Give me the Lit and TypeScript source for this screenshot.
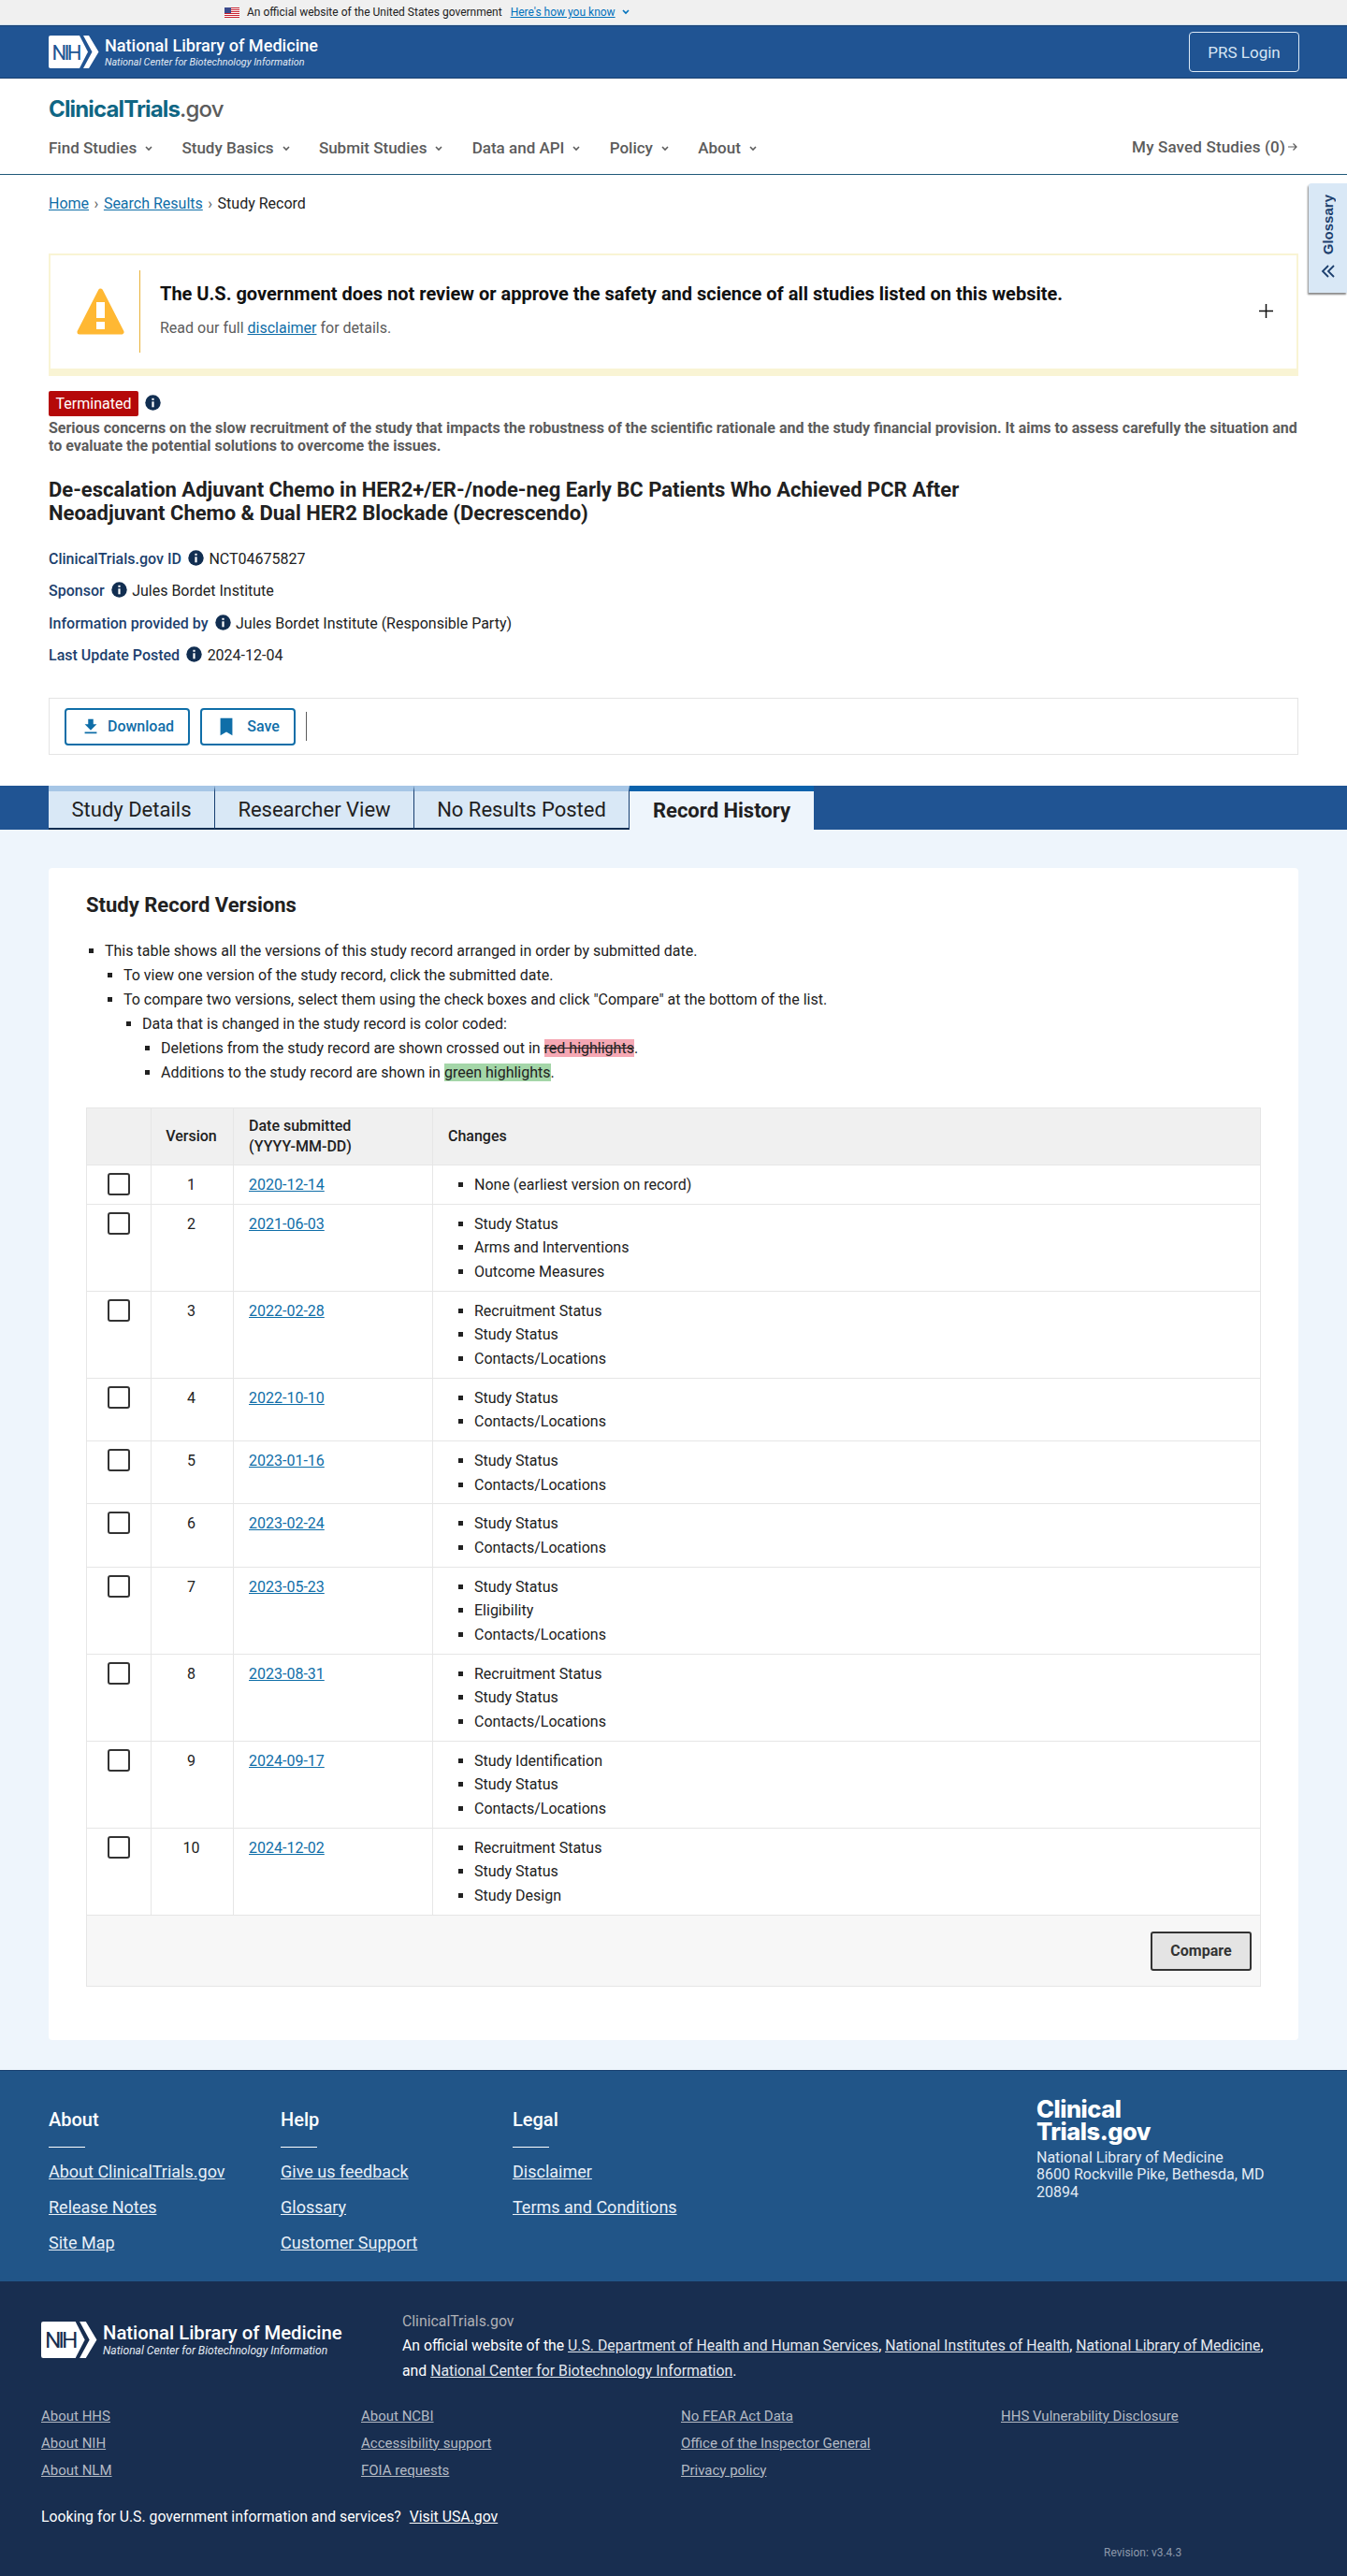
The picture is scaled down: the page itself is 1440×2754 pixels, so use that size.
import { LitElement, html, css, svg } from "lit";
import { customElement } from "lit/decorators.js";

const rows: [string, string[]][] = [
  ["2020-12-14", ["None (earliest version on record)"]],
  ["2021-06-03", ["Study Status", "Arms and Interventions", "Outcome Measures"]],
  ["2022-02-28", ["Recruitment Status", "Study Status", "Contacts/Locations"]],
  ["2022-10-10", ["Study Status", "Contacts/Locations"]],
  ["2023-01-16", ["Study Status", "Contacts/Locations"]],
  ["2023-02-24", ["Study Status", "Contacts/Locations"]],
  ["2023-05-23", ["Study Status", "Eligibility", "Contacts/Locations"]],
  ["2023-08-31", ["Recruitment Status", "Study Status", "Contacts/Locations"]],
  ["2024-09-17", ["Study Identification", "Study Status", "Contacts/Locations"]],
  ["2024-12-02", ["Recruitment Status", "Study Status", "Study Design"]],
];

const chevron = html`<svg class="chev" viewBox="0 0 8 6" width="8" height="6"><path d="M1 1l3 3 3-3" fill="none" stroke="currentColor" stroke-width="1.6"/></svg>`;
const info = html`<svg class="info" viewBox="0 0 17 17" width="17" height="17"><circle cx="8.500" cy="8.500" r="8.200" fill="#112e51"/><rect x="7.400" y="7.300" width="2.200" height="6" fill="#fff"/><rect x="7.400" y="3.800" width="2.200" height="2" fill="#fff"/></svg>`;

function nihLogo(h: number, w: number, navy: string) {
  return html`<svg class="nih" viewBox="0 0 54 35" width=${w} height=${h}>
    <path d="M2 0H33L42 17.5 33 35H2Q0 35 0 33V2Q0 0 2 0Z" fill="#fff"/>
    <path d="M37 0H43L53.5 17.5 43 35H37L46.5 17.5Z" fill="#fff"/>
    <text x="3.500" y="25.500" font-family="Roboto, sans-serif" font-size="22" textLength="32" fill=${navy}>NIH</text>
  </svg>`;
}

const flag = svg`<rect width="16" height="11" fill="#fff"/>
  ${[0, 2, 4, 6, 8, 10].map((y) => svg`<rect y=${y} width="16" height="1" fill="#c8202f"/>`)}
  <rect width="7" height="6" fill="#3b4a8c"/>`;

@customElement("app-root")
export class AppRoot extends LitElement {
  static styles = css`
    :host { display: block; width: 1440px; font-family: Roboto, "Liberation Sans", sans-serif; font-size: 16px; color: #212121; position: relative; background: #fff; }
    a { color: #0f6ea8; text-decoration: underline; }
    .gov { height: 26px; background: #f0f0f0; display: flex; align-items: center; padding-left: 240px; font-size: 12px; border-bottom: 1px solid #cfe0ee; box-sizing: content-box; }
    .gov svg.f { margin-right: 8px; }
    .gov a { margin-left: 9px; color: #0071bc; }
    .gov .chev { margin-left: 7px; color: #0071bc; }
    .hdr { height: 55px; background: #205493; border-top: 1px solid #173f70; border-bottom: 1px solid #173f70; display: flex; align-items: center; justify-content: space-between; padding: 0 52px; }
    .brand { display: flex; align-items: center; color: #fff; }
    .brand .t { margin-left: 6px; }
    .brand .a { font-size: 18.1px; font-weight: 500; line-height: 22px; white-space: nowrap; }
    .brand .b { font-size: 10.75px; font-style: italic; line-height: 13px; color: #e3ebf4; white-space: nowrap; }
    .prs { width: 118px; height: 43px; box-sizing: border-box; border: 1px solid #dce9f5; border-radius: 4px; color: #d7e6f4; font-size: 17px; display: flex; align-items: center; justify-content: center; margin-right: -1px; }
    .site { height: 102px; border-bottom: 1px solid #205a7a; padding: 0 52px; box-sizing: content-box; display: flex; flex-direction: column; }
    .logo { font-family: Inter, sans-serif; font-size: 24px; font-weight: 700; letter-spacing: -0.85px; line-height: 28px; margin-top: 19px; color: #0f6684; }
    .logo span { color: #5c5c5c; font-weight: 500; }
    .nav { display: flex; justify-content: space-between; margin-top: 15px; color: #5c5c5c; font-weight: 500; font-size: 17px; line-height: 24px; }
    .nav .items { display: flex; gap: 31.3px; }
    .nav .items span { display: flex; align-items: center; }
    .nav .chev { margin-left: 9px; margin-top: 1px; }
    .saved { display: flex; align-items: center; margin-top: -2px; letter-spacing: 0.15px; }
    .crumb { padding: 20px 52px 11px; line-height: 22px; display: flex; align-items: center; }
    .crumb i { font-style: normal; color: #5c5c5c; margin: 0 5.5px; }
    .alert { margin: 31px 52px 0; height: 131px; box-sizing: border-box; border: 2px solid #f9f4d4; border-bottom-width: 8px; display: flex; align-items: center; padding-left: 28px; position: relative; }
    .alert .ic { width: 51px; height: 52px; flex: none; margin-top: -2px; }
    .alert .sep { width: 1px; height: 88px; background: #e8b23a; margin: -2px 21px 0 16px; flex: none; }
    .alert h3 { margin: 0; font-size: 20px; font-weight: 700; line-height: 26px; color: #111; }
    .alert p { margin: 12px 0 0; color: #5c5c5c; line-height: 24px; }
    .alert .msg { margin-top: -4px; }
    .plus { position: absolute; right: 25px; top: 52px; width: 15px; height: 15px; }
    .stat { margin: 16px 52px 0; display: flex; align-items: flex-start; }
    .badge { background: #b50909; color: #fff; height: 27px; width: 96px; border-radius: 2px; display: flex; align-items: center; justify-content: center; }
    .stat .info { margin: 4px 0 0 7px; }
    .reason { margin: 4px 52px 0; font-weight: 700; color: #5c5c5c; line-height: 18.5px; }
    h1 { margin: 25px 52px 0; font-size: 22px; font-weight: 700; line-height: 25px; color: #212121; width: 1060px; }
    .meta { margin: 25px 52px 0; display: flex; flex-direction: column; gap: 10.3px; }
    .meta div { display: flex; align-items: center; line-height: 24px; }
    .meta b { color: #1c3f6e; font-weight: 500; }
    .meta .info { margin: -3px 5.5px 0 7px; }
    .actions { margin: 33px 52px 0; height: 61px; box-sizing: border-box; border: 1px solid #e4e4e4; display: flex; align-items: flex-start; padding: 10px 0 0 16px; }
    .btn { height: 40px; box-sizing: border-box; border: 2px solid #0f6ea8; border-radius: 4px; color: #0f6ea8; font-weight: 500; display: flex; align-items: center; justify-content: center; }
    .btn svg { fill: #0f6ea8; margin-right: 7px; }
    .vl { width: 1px; height: 31px; background: #5c5c5c; margin: 4px 0 0 11px; }
    .tabs { margin-top: 33px; height: 47px; background: #205493; padding-left: 52px; display: flex; }
    .tab { box-sizing: border-box; height: 47px; background: #d9e8f6; border-top: 6px solid #a6c6e6; border-right: 1px solid #173f70; border-bottom: 2px solid #112e51; font-size: 22px; display: flex; align-items: center; justify-content: center; color: #212121; }
    .tab.on { background: #eef5fc; border-top-color: #0b62ac; border-right: none; border-bottom: none; font-weight: 700; margin-bottom: -1px; height: 48px; }
    main { background: #eef5fc; padding: 41px 52px 32px; margin-top: 0; }
    .card { background: #fff; border-radius: 4px; padding: 26px 40px 57px; }
    h2 { margin: 0; font-size: 22px; font-weight: 700; line-height: 28px; color: #212121; }
    .card ul.desc { margin: 22px 0 0; padding: 0 0 0 20px; line-height: 26px; }
    ul.desc, ul.desc ul { list-style: square; padding-left: 20px; margin: 0; }
    .del { background: #f5a8b4; text-decoration: line-through; }
    .add { background: #a4d6a8; }
    table { border-collapse: collapse; width: 1256px; margin-top: 24px; table-layout: fixed; }
    th, td { border: 1px solid #e6e6e6; padding: 8px 8px 7.2px; vertical-align: top; line-height: 25.6px; text-align: left; }
    th { background: #f0f0f0; font-weight: 500; vertical-align: middle; line-height: 22px; padding: 8px 16px; }
    td.dt { padding-left: 16px; }
    th.v, td.v { text-align: center; padding-left: 8px; padding-right: 10px; }
    .cb { width: 24px; height: 24px; box-sizing: border-box; border: 2px solid #333; border-radius: 3px; margin: 0 0 0 14px; background: #fff; }
    td ul { margin: 0; padding: 0 0 0 36px; list-style: square; }
    td.foot { background: #f7f7f7; padding: 17px 9px 16px 0; }
    .cmp { width: 108px; height: 42px; box-sizing: border-box; border: 2px solid #333; border-radius: 3px; background: #e4e4e4; color: #333; font-weight: 700; margin-left: auto; display: flex; align-items: center; justify-content: center; }
    .f1 { height: 225px; background: #215588; border-top: 1px solid #173f70; padding: 0 52px; display: flex; position: relative; color: #fff; }
    .col { width: 248px; padding-top: 40px; }
    .col h4 { margin: 0; font-size: 20px; font-weight: 500; line-height: 24px; }
    .col hr { width: 39px; height: 1px; background: #fff; border: 0; margin: 17px 0 7px; }
    .col a { display: block; color: #e8f0f8; font-size: 18px; line-height: 38px; }
    .addr { margin-left: auto; width: 280px; padding-top: 29px; }
    .addr .big { font-family: Inter, sans-serif; font-weight: 800; font-size: 25.5px; line-height: 24px; letter-spacing: -0.5px; }
    .addr p { margin: 7px 0 0; line-height: 18.6px; color: #e3ebf4; }
    .f2 { height: 316px; background: #182e50; color: #fff; padding: 0 44px; box-sizing: border-box; font-size: 15.8px; }
    .f2top { display: flex; padding-top: 32px; }
    .f2 .brand { width: 386px; align-items: flex-start; padding-top: 11px; }
    .f2 .brand .a { font-size: 20.3px; line-height: 24px; }
    .f2 .brand .b { font-size: 12.1px; line-height: 14px; }
    .f2 .src { color: #aeb0b5; line-height: 22px; }
    .f2 .txt { line-height: 27px; margin-top: 1px; }
    .f2 .txt a { color: #e3e8ef; }
    .links { display: grid; grid-template-columns: repeat(4, 342px); margin-top: 21px; grid-auto-flow: column; grid-template-rows: repeat(3, 29px); }
    .links a { color: #b4bac4; font-size: 15px; line-height: 29px; }
    .usa { margin-top: 23px; line-height: 24px; }
    .usa a { color: #fff; margin-left: 5px; }
    .rev { color: #8d99ab; font-size: 12px; line-height: 16px; margin: 18px 0 0 1136px; }
    .gloss { position: absolute; top: 196px; right: 0; width: 41px; height: 117px; box-sizing: border-box; background: #d9e8f6; box-shadow: -1px 2px 2px #8a8a8a; border-radius: 3px 0 0 0; display: flex; flex-direction: column; align-items: center; padding-top: 12px; color: #1c3f6e; }
    .gloss span { writing-mode: vertical-rl; transform: rotate(180deg); font-family: "Liberation Sans", sans-serif; font-weight: 700; font-size: 15px; }
    .gloss svg { margin-top: 10px; }
  `;

  render() {
    return html`
      <div class="gov">
        <svg class="f" width="16" height="11" viewBox="0 0 16 11">${flag}</svg>
        <span>An official website of the United States government</span>
        <a href="#">Here's how you know</a>${chevron}
      </div>
      <div class="hdr">
        <div class="brand">${nihLogo(35, 54, "#205493")}
          <div class="t"><div class="a">National Library of Medicine</div><div class="b">National Center for Biotechnology Information</div></div>
        </div>
        <div class="prs">PRS Login</div>
      </div>
      <div class="site">
        <div class="logo">ClinicalTrials<span>.gov</span></div>
        <div class="nav">
          <div class="items">
            ${["Find Studies", "Study Basics", "Submit Studies", "Data and API", "Policy", "About"].map((n) => html`<span>${n}${chevron}</span>`)}
          </div>
          <div class="saved">My Saved Studies (0)<svg width="12" height="12" viewBox="0 0 12 12" style="margin-left:2px"><path d="M1 6h9M6.500 2.500L10 6l-3.500 3.500" fill="none" stroke="#5c5c5c" stroke-width="1.200"/></svg></div>
        </div>
      </div>
      <div class="crumb"><a href="#">Home</a><i>›</i><a href="#">Search Results</a><i>›</i><span>Study Record</span></div>
      <div class="alert">
        <svg class="ic" viewBox="0 0 51 52"><path d="M25.500 4L48 48H3Z" fill="#ffb833" stroke="#ffb833" stroke-width="5" stroke-linejoin="round"/><rect x="21" y="16" width="9" height="17" fill="#fff"/><rect x="21" y="37" width="9" height="8" fill="#fff"/></svg>
        <div class="sep"></div>
        <div class="msg">
          <h3>The U.S. government does not review or approve the safety and science of all studies listed on this website.</h3>
          <p>Read our full <a href="#">disclaimer</a> for details.</p>
        </div>
        <svg class="plus" viewBox="0 0 15 15"><path d="M7.500 0v15M0 7.500h15" stroke="#111" stroke-width="1.500"/></svg>
      </div>
      <div class="stat"><div class="badge">Terminated</div>${info}</div>
      <div class="reason">Serious concerns on the slow recruitment of the study that impacts the robustness of the scientific rationale and the study financial provision. It aims to assess carefully the situation and to evaluate the potential solutions to overcome the issues.</div>
      <h1>De-escalation Adjuvant Chemo in HER2+/ER-/node-neg Early BC Patients Who Achieved PCR After Neoadjuvant Chemo &amp; Dual HER2 Blockade (Decrescendo)</h1>
      <div class="meta">
        <div><b>ClinicalTrials.gov ID</b>${info}<span>NCT04675827</span></div>
        <div><b>Sponsor</b>${info}<span>Jules Bordet Institute</span></div>
        <div><b>Information provided by</b>${info}<span>Jules Bordet Institute (Responsible Party)</span></div>
        <div><b>Last Update Posted</b>${info}<span>2024-12-04</span></div>
      </div>
      <div class="actions">
        <div class="btn" style="width:134px"><svg width="22" height="22" viewBox="0 0 24 24"><path d="M19 9h-4V3H9v6H5l7 7 7-7zM5 18v2h14v-2H5z"/></svg>Download</div>
        <div class="btn" style="width:102px;margin-left:11px"><svg width="22" height="22" viewBox="0 0 24 24" style="margin-right:11px"><path d="M5 2h14v20l-7-4-7 4z"/></svg>Save</div>
        <div class="vl"></div>
      </div>
      <div class="tabs">
        <div class="tab" style="width:178px">Study Details</div>
        <div class="tab" style="width:213px">Researcher View</div>
        <div class="tab" style="width:230px">No Results Posted</div>
        <div class="tab on" style="width:197px">Record History</div>
      </div>
      <main>
        <div class="card">
          <h2>Study Record Versions</h2>
          <ul class="desc">
            <li>This table shows all the versions of this study record arranged in order by submitted date.
              <ul>
                <li>To view one version of the study record, click the submitted date.</li>
                <li>To compare two versions, select them using the check boxes and click "Compare" at the bottom of the list.
                  <ul>
                    <li>Data that is changed in the study record is color coded:
                      <ul>
                        <li>Deletions from the study record are shown crossed out in <span class="del">red highlights</span>.</li>
                        <li>Additions to the study record are shown in <span class="add">green highlights</span>.</li>
                      </ul>
                    </li>
                  </ul>
                </li>
              </ul>
            </li>
          </ul>
          <table>
            <colgroup><col style="width:69px"/><col style="width:88px"/><col style="width:213px"/><col/></colgroup>
            <thead><tr><th></th><th class="v">Version</th><th>Date submitted<br/>(YYYY-MM-DD)</th><th>Changes</th></tr></thead>
            <tbody>
              ${rows.map(([d, c], i) => html`<tr>
                <td><div class="cb"></div></td>
                <td class="v">${i + 1}</td>
                <td class="dt"><a href="#">${d}</a></td>
                <td><ul>${c.map((x) => html`<li>${x}</li>`)}</ul></td>
              </tr>`)}
              <tr><td class="foot" colspan="4"><div class="cmp">Compare</div></td></tr>
            </tbody>
          </table>
        </div>
      </main>
      <div class="f1">
        <div class="col"><h4>About</h4><hr/><a href="#">About ClinicalTrials.gov</a><a href="#">Release Notes</a><a href="#">Site Map</a></div>
        <div class="col"><h4>Help</h4><hr/><a href="#">Give us feedback</a><a href="#">Glossary</a><a href="#">Customer Support</a></div>
        <div class="col"><h4>Legal</h4><hr/><a href="#">Disclaimer</a><a href="#">Terms and Conditions</a></div>
        <div class="addr">
          <div class="big">Clinical<br/>Trials.gov</div>
          <p>National Library of Medicine<br/>8600 Rockville Pike, Bethesda, MD<br/>20894</p>
        </div>
      </div>
      <div class="f2">
        <div class="f2top">
          <div class="brand">${nihLogo(39, 60, "#182e50")}
            <div class="t"><div class="a">National Library of Medicine</div><div class="b">National Center for Biotechnology Information</div></div>
          </div>
          <div>
            <div class="src">ClinicalTrials.gov</div>
            <div class="txt">An official website of the <a href="#">U.S. Department of Health and Human Services</a>, <a href="#">National Institutes of Health</a>, <a href="#">National Library of Medicine</a>,<br/>and <a href="#">National Center for Biotechnology Information</a>.</div>
          </div>
        </div>
        <div class="links">
          <a href="#">About HHS</a><a href="#">About NIH</a><a href="#">About NLM</a>
          <a href="#">About NCBI</a><a href="#">Accessibility support</a><a href="#">FOIA requests</a>
          <a href="#">No FEAR Act Data</a><a href="#">Office of the Inspector General</a><a href="#">Privacy policy</a>
          <a href="#">HHS Vulnerability Disclosure</a>
        </div>
        <div class="usa">Looking for U.S. government information and services? <a href="#">Visit USA.gov</a></div>
        <div class="rev">Revision: v3.4.3</div>
      </div>
      <div class="gloss"><span>Glossary</span><svg width="16" height="16" viewBox="0 0 16 16"><path d="M8 2L2 8l6 6M14 2L8 8l6 6" fill="none" stroke="#1c3f6e" stroke-width="1.800"/></svg></div>
    `;
  }
}
